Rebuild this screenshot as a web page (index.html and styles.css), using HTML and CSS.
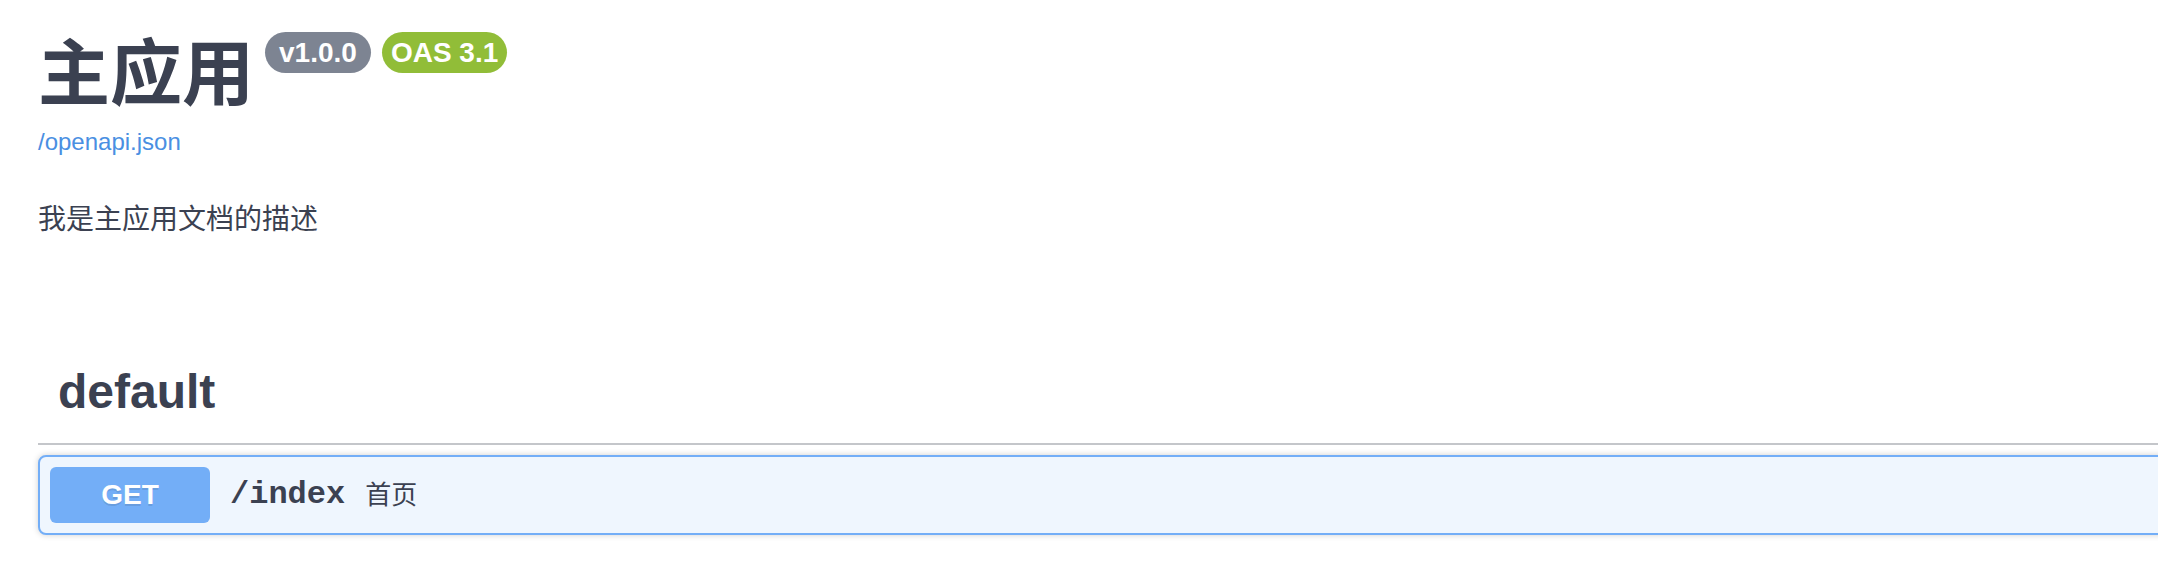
FILE: index.html
```html
<!DOCTYPE html>
<html>
  <head>
    <meta charset="utf-8" />
    <title>主应用 - Swagger UI</title>
    <link rel="stylesheet" href="styles.css">
  </head>
  <body>
    <div class="wrapper">
      <section class="info">
        <hgroup class="main">
          <h2 class="title">主应用<small class="version"><pre>v1.0.0</pre></small><small class="version version-stamp"><pre>OAS 3.1</pre></small></h2>
          <a class="link" href="#">/openapi.json</a>
        </hgroup>
        <div class="description">
          <p>我是主应用文档的描述</p>
        </div>
      </section>

      <div class="tag-section">
        <h3 class="opblock-tag"><span>default</span></h3>
        <div class="opblock opblock-get">
          <div class="opblock-summary">
            <span class="method">GET</span>
            <span class="path">/index</span>
            <span class="summary-desc">首页</span>
          </div>
        </div>
      </div>
    </div>
  </body>
</html>
```

FILE: styles.css
```css
body {
  font-family: "Liberation Sans", "Noto Sans CJK SC", sans-serif;
  color: #3b4151;
  background-color: #fff;
  margin: 0;
  overflow: hidden;
}

.wrapper {
  padding: 0 0 0 38px;
  margin-right: -40px;
}

/* info block */
.info {
  margin: 38px 0 0;
}

.main {
  margin: 0;
}

.title {
  font-size: 72px;
  line-height: 72px;
  font-weight: 700;
  margin: 0;
  color: #3b4151;
}

.version {
  display: inline-block;
  position: relative;
  top: -12px;
  vertical-align: super;
  margin-left: 11px;
  padding: 4px 14px;
  border-radius: 114px;
  background-color: #7d8492;
  font-size: 28px;
  line-height: 33px;
}

.version-stamp {
  margin-left: 11px;
  padding: 4px 9px;
  background-color: #91bd38;
}

.version pre {
  margin: 0;
  font-family: "Liberation Sans", sans-serif;
  font-weight: 700;
  color: #fff;
}

.link {
  display: block;
  margin-top: 18px;
  font-size: 24px;
  color: #4a8fe2;
  text-decoration: none;
}

.description p {
  margin: 44px 0 0;
  font-size: 28px;
  line-height: 40px;
}

/* tag + operations */
.tag-section {
  margin-top: 104px;
}

.opblock-tag {
  margin: 0 0 10px;
  padding: 20px 40px 24px 20px;
  font-size: 48px;
  font-weight: 700;
  border-bottom: 2px solid rgba(59, 65, 81, 0.3);
}

.opblock {
  margin: 0 0 30px;
  border: 2px solid #73aef7;
  border-radius: 8px;
  background-color: #eff6fe;
  box-shadow: 0 0 6px rgba(0, 0, 0, 0.19);
}

.opblock-summary {
  display: flex;
  align-items: center;
  padding: 10px;
}

.method {
  min-width: 160px;
  padding: 12px 0;
  border-radius: 6px;
  background-color: #73aef7;
  color: #fff;
  font-size: 28px;
  line-height: 32px;
  font-weight: 700;
  text-align: center;
  text-shadow: 0 2px 0 rgba(0, 0, 0, 0.1);
}

.path {
  padding: 0 20px;
  font-family: "Liberation Mono", monospace;
  font-size: 32px;
  line-height: 36px;
  font-weight: 700;
}

.summary-desc {
  font-size: 26px;
  line-height: 32px;
  flex: 1 1 auto;
}
```
